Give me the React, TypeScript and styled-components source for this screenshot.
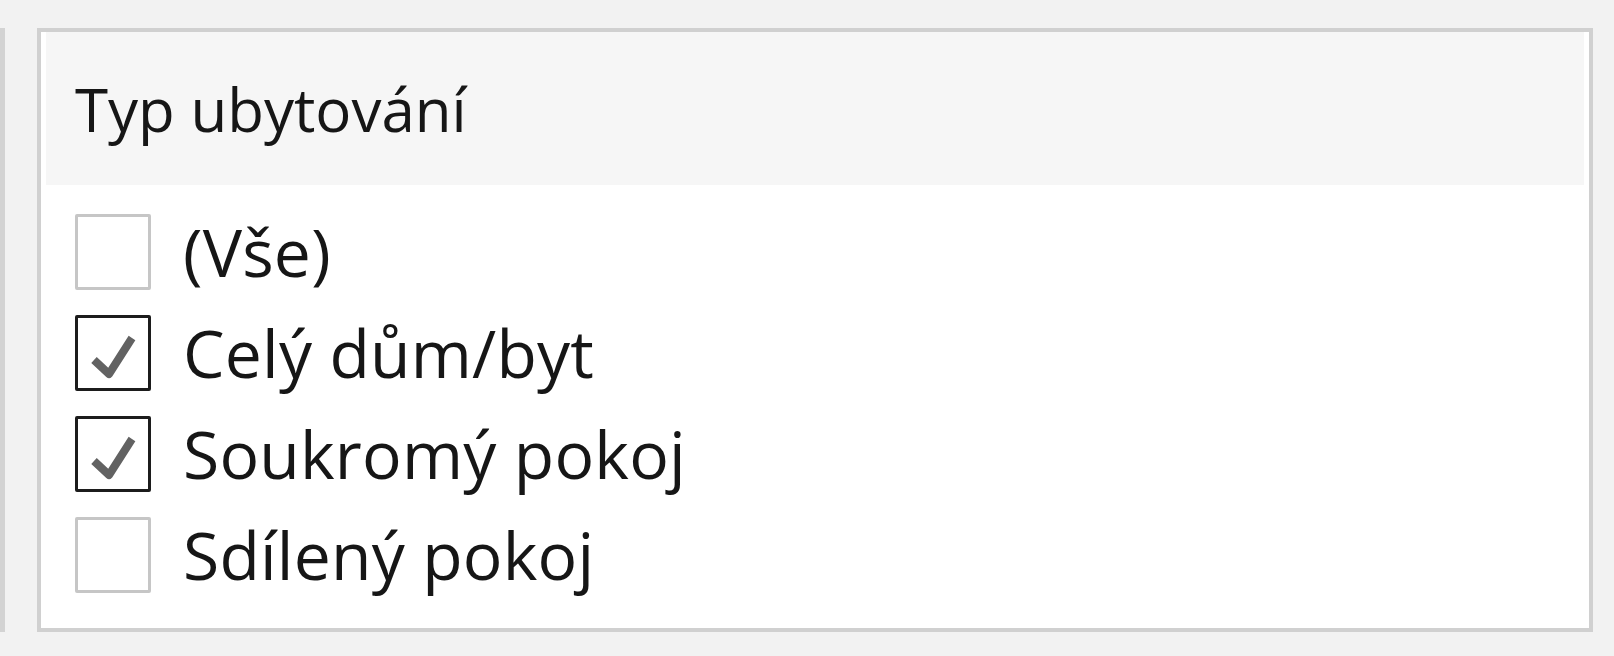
import React from "react";
import styled, { createGlobalStyle } from "styled-components";

const GlobalStyle = createGlobalStyle`
  html, body {
    margin: 0;
    padding: 0;
    background: #f2f2f2;
  }
  body {
    font-family: "Open Sans", "Noto Sans", sans-serif;
    color: #1a1a1a;
  }
`;

const Page = styled.div`
  display: flex;
  align-items: stretch;
  gap: 32px;
  padding-top: 28px;
  height: 604px;
`;

const NeighbourEdge = styled.div`
  width: 5px;
  background: #d3d3d3;
`;

const Panel = styled.section`
  width: 1556px;
  box-sizing: border-box;
  border: 4px solid #d0d0d0;
  background: #ffffff;
  padding: 0 5px;
  display: flex;
  flex-direction: column;
`;

const Header = styled.header`
  height: 153px;
  display: flex;
  align-items: center;
  padding-left: 29px;
  background: #f6f6f6;
  font-size: 60px;
  color: #161616;
`;

const List = styled.ul`
  list-style: none;
  margin: 0;
  padding: 29px 0 0 29px;
  display: flex;
  flex-direction: column;
  gap: 25px;
`;

const Row = styled.li`
  display: flex;
  align-items: center;
  gap: 32px;
  height: 76px;
  font-size: 66px;
  letter-spacing: 0.2px;
  color: #161616;
`;

const Box = styled.span<{ $checked: boolean }>`
  width: 76px;
  height: 76px;
  box-sizing: border-box;
  border: 3px solid ${(p) => (p.$checked ? "#1c1c1c" : "#c6c6c6")};
  border-radius: 2px;
  background: #ffffff;
  display: flex;
  flex-shrink: 0;
`;

const Label = styled.span`
  line-height: 1;
  padding-bottom: 2px;
`;

const Check = () => (
  <svg width="70" height="70" viewBox="0 0 70 70">
    <path
      d="M16 42 L31 56 L54 20"
      fill="none"
      stroke="#626262"
      strokeWidth="8"
      strokeLinejoin="round"
      strokeLinecap="butt"
    />
  </svg>
);

const options = [
  { label: "(Vše)", checked: false },
  { label: "Celý dům/byt", checked: true },
  { label: "Soukromý pokoj", checked: true },
  { label: "Sdílený pokoj", checked: false },
];

const App: React.FC = () => {
  return (
    <>
      <GlobalStyle />
      <Page>
        <NeighbourEdge />
        <Panel>
          <Header>Typ ubytování</Header>
          <List>
            {options.map((o) => (
              <Row key={o.label}>
                <Box $checked={o.checked}>{o.checked && <Check />}</Box>
                <Label>{o.label}</Label>
              </Row>
            ))}
          </List>
        </Panel>
      </Page>
    </>
  );
};

export default App;
